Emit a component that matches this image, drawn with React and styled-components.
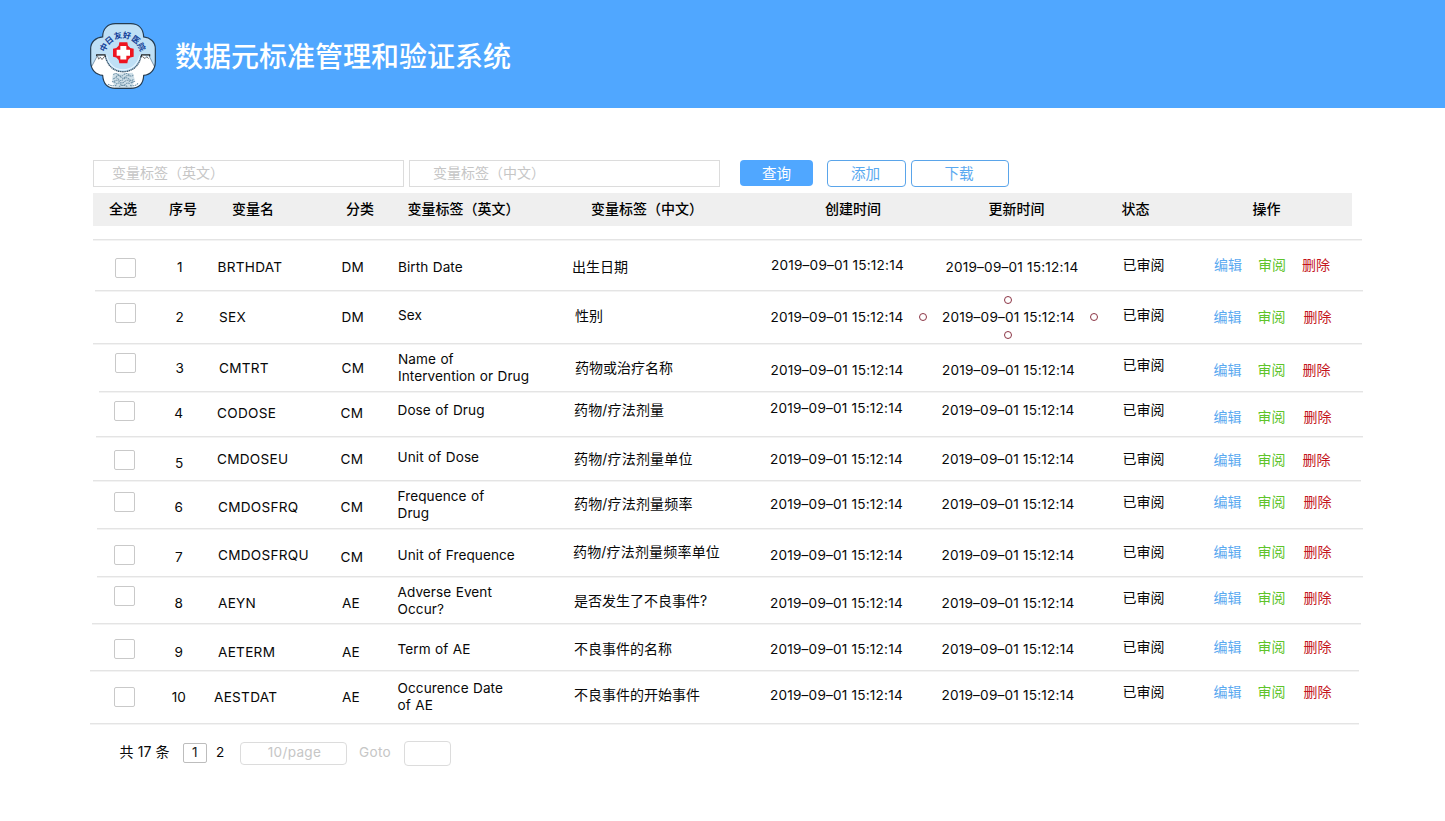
import React from 'react';
import styled, { createGlobalStyle } from 'styled-components';

const GlobalStyle = createGlobalStyle`
  * { box-sizing: border-box; }
  body {
    margin: 0;
    background: #fff;
    color: #080808;
    font-family: Inter, "Noto Sans CJK SC", sans-serif;
    font-size: 14px;
    line-height: 17px;
  }
`;

const Page = styled.div`
  width: 1445px;
  height: 821px;
  overflow: hidden;
`;

const Header = styled.header`
  display: flex;
  align-items: center;
  gap: 19px;
  height: 108px;
  padding: 0 0 0 90px;
  background: #50a7ff;
`;

const Emblem = styled.svg`
  display: block;
  width: 66px;
  height: 66px;
  margin-top: 4px;
`;

const Title = styled.h1`
  margin: 2px 0 0;
  color: #fff;
  font: 500 28px/40px "Noto Sans CJK SC", sans-serif;
`;

const Toolbar = styled.div`
  display: flex;
  align-items: flex-start;
  height: 85px;
  padding: 52px 0 0 93px;
`;

const SearchBox = styled.div`
  width: 310.5px;
  height: 27px;
  margin-right: ${(p) => p.$after}px;
  padding-left: ${(p) => p.$inset}px;
  border: 1px solid #dcdcdc;
  color: #c6c6c6;
  font-family: "Noto Sans CJK SC", sans-serif;
  line-height: 23px;
`;

const Button = styled.button`
  display: flex;
  justify-content: center;
  width: ${(p) => p.$width}px;
  height: ${(p) => (p.$primary ? 26 : 27)}px;
  margin: 0 ${(p) => p.$after || 0}px 0 0;
  padding: 0 ${(p) => (p.$primary ? 0 : 2)}px 0 0;
  border: ${(p) => (p.$primary ? '0' : '1px solid #5aa5ea')};
  border-radius: 4px;
  background: ${(p) => (p.$primary ? '#50a7ff' : '#fff')};
  color: ${(p) => (p.$primary ? '#fff' : '#5aa9f0')};
  font: 400 14.6px/${(p) => (p.$primary ? 26 : 24)}px "Noto Sans CJK SC", sans-serif;
`;

const TableHead = styled.div`
  display: grid;
  grid-template-columns: 60px 63px 114px 61.5px 183.5px 234px 163.5px 133px 131px 1fr;
  width: 1259px;
  height: 33px;
  margin: 0 0 13px 93px;
  padding-left: 16px;
  background: #efefef;
  color: #000;
  font-family: "Noto Sans CJK SC", sans-serif;
  font-weight: 500;
  line-height: 30px;
`;

const Divider = styled.div`
  width: ${(p) => p.$to - p.$from}px;
  height: 2px;
  margin-left: ${(p) => p.$from}px;
  border-top: 1px solid #e4e4e4;
  border-bottom: 1px solid #f3f3f3;
`;

const Row = styled.div`
  display: grid;
  grid-template-columns: 114px 45px 58px 123.5px 56.5px 177px 196px 171.5px 181px 91px 1fr;
  height: ${(p) => p.$height}px;
`;

const Cell = styled.div`
  position: relative;
  padding-top: ${(p) => p.$mid - 11}px;
  letter-spacing: ${(p) => p.$track || 0}px;
  text-align: ${(p) => p.$align || 'left'};
  white-space: pre;
`;

const LatinCell = styled(Cell)`
  padding-top: ${(p) => p.$mid - 10}px;
  font-size: 13.6px;
  font-weight: 400;
  word-spacing: ${(p) => p.$gap || 0}px;
`;

const Shifted = styled.span`
  display: inline-block;
  margin-left: ${(p) => p.$by}px;
`;

const Checkbox = styled.div`
  width: 21px;
  height: 20px;
  margin: ${(p) => p.$top - 2}px 0 0 ${(p) => p.$dx}px;
  border: 1px solid #c9c9c9;
  border-radius: 2px;
`;

const Actions = styled.div`
  display: flex;
  padding-top: ${(p) => p.$mid - 11}px;
  padding-left: ${(p) => p.$dx}px;
`;

const Action = styled.span`
  width: ${(p) => p.$width || 44}px;
  color: ${(p) => p.$color};
`;

const Handle = styled.i`
  position: absolute;
  left: ${(p) => p.$x}px;
  top: ${(p) => p.$y}px;
  width: 8px;
  height: 8px;
  border: 1px solid #8c3545;
  border-radius: 50%;
`;

const Pagination = styled.footer`
  display: flex;
  align-items: flex-start;
  height: 24px;
  margin: 16px 0 0 120px;
`;

const Total = styled.span`
  width: 63px;
  padding-top: 2px;
  margin-left: -0.5px;
  margin-right: 0.5px;
  letter-spacing: 0.1px;
`;

const PageBox = styled.span`
  width: ${(p) => p.$width}px;
  height: ${(p) => p.$height}px;
  margin-top: ${(p) => p.$top || 0}px;
  padding-left: ${(p) => p.$inset || 0}px;
  border: 1px solid ${(p) => p.$line};
  border-radius: ${(p) => p.$radius}px;
  color: ${(p) => p.$color || '#222'};
  font-size: 13.6px;
  line-height: ${(p) => p.$leading || 17}px;
  text-align: center;
  letter-spacing: 0.3px;
`;

const PageNumber = styled.span`
  width: 33px;
  padding: 3px 0 0 9px;
  font-size: 13.6px;
`;

const Goto = styled.span`
  width: 57px;
  padding: 3px 0 0 12px;
  color: #c6c6c6;
  font-size: 13.6px;
  letter-spacing: 0.3px;
`;

const heads = ['全选', '序号', '变量名', '分类', '变量标签（英文）', '变量标签（中文）', '创建时间', '更新时间', '状态', '操作'];

const STAMP = '2019–09–01 15:12:14';

/* Each value is [vertical middle, horizontal shift] inside its row. */
const rows = [
  { h: 51, line: [93, 1362], box: [19, 1], name: 'BRTHDAT', type: 'DM', en: 'Birth Date', cn: '出生日期', at: { no: [28, 1], name: [28, 0.5], type: [28, 1], en: [28, 1], cn: [28, -2], made: [26, 1], edit: [28, 4], state: [26, 0], ops: [26, 0.5, 44] } },
  { h: 53, line: [95, 1363], box: [13, 1], name: 'SEX', type: 'DM', en: 'Sex', cn: '性别', handles: true, at: { no: [27, 1], name: [27, 2], type: [27, 1], en: [25, 1], cn: [26, 1], made: [27, 0.5], edit: [27, 0.5], state: [25, 0], ops: [27, 0, 46] } },
  { h: 48, line: [93, 1362], box: [10, 1], name: 'CMTRT', type: 'CM', en: 'Name of\nIntervention or Drug', cn: '药物或治疗名称', at: { no: [25, 1], name: [25, 2], type: [25, 1], en: [16, 1], cn: [25, 1], made: [27, 0.5], edit: [27, 0.5], state: [22, 0], ops: [27, 0, 45] } },
  { h: 45, line: [99, 1363], box: [10, 0], name: 'CODOSE', type: 'CM', en: 'Dose of Drug', cn: '药物/疗法剂量', at: { no: [22, 0], name: [22, 0], type: [22, 0], en: [19, 0.5], cn: [19, 0], made: [17, 0], edit: [19, 0], state: [19, 0], ops: [26, 0, 46] } },
  { h: 44, line: [96, 1363], box: [14, 0], name: 'CMDOSEU', type: 'CM', en: 'Unit of Dose', cn: '药物/疗法剂量单位', at: { no: [27, 0.5], name: [23, 0], type: [23, 0], en: [21, 0.5], cn: [23, 0], made: [23, 0], edit: [23, 0], state: [23, 0], ops: [24, 0, 45] } },
  { h: 48, line: [93, 1361], box: [12, 0], name: 'CMDOSFRQ', type: 'CM', en: 'Frequence of\nDrug', cn: '药物/疗法剂量频率', at: { no: [27, 0], name: [27, 1], type: [27, 0], en: [16, 0.5], cn: [24, 0], made: [24, 0], edit: [24, 0], state: [22, 0], ops: [22, 0, 46] } },
  { h: 48, line: [97, 1363], box: [17, 0], name: 'CMDOSFRQU', type: 'CM', en: 'Unit of Frequence', cn: '药物/疗法剂量频率单位', at: { no: [29, 0], name: [27, 1], type: [29, 0], en: [27, 0.5], cn: [24, -1], made: [27, 0], edit: [27, 0], state: [24, 0], ops: [24, 0, 46] } },
  { h: 47, line: [97, 1363], box: [10, 0], name: 'AEYN', type: 'AE', en: 'Adverse Event\nOccur?', cn: '是否发生了不良事件?', at: { no: [27, 0], name: [27, 1], type: [27, 1.5], en: [16, 0.5], cn: [25, 0], made: [27, 0], edit: [27, 0], state: [22, 0], ops: [22, 0, 46] } },
  { h: 47, line: [92, 1361], box: [16, 0], name: 'AETERM', type: 'AE', en: 'Term of AE', cn: '不良事件的名称', at: { no: [29, 0], name: [29, 1], type: [29, 1.5], en: [26, 0.5], cn: [26, 0], made: [26, 0], edit: [26, 0], state: [24, 0], ops: [24, 0, 46] } },
  { h: 53, line: [90, 1359], box: [17, 0], name: 'AESTDAT', type: 'AE', en: 'Occurence Date\nof AE', cn: '不良事件的开始事件', at: { no: [27, 0], name: [27, -3], type: [27, 1.5], en: [18, 0.5], cn: [25, 0], made: [25, 0], edit: [25, 0], state: [22, 0], ops: [22, 0, 46] } },
];

function Latin({ at, children, extra, ...rest }) {
  return (
    <LatinCell $mid={at[0]} {...rest}>
      <Shifted $by={at[1]}>{children}</Shifted>
      {extra}
    </LatinCell>
  );
}

function Han({ at, track, children }) {
  return (
    <Cell $mid={at[0]} $track={track}>
      <Shifted $by={at[1]}>{children}</Shifted>
    </Cell>
  );
}

const selection = (
  <>
    <Handle $x={-23} $y={21} />
    <Handle $x={148} $y={21} />
    <Handle $x={62} $y={4} />
    <Handle $x={62} $y={39} />
  </>
);

function DataRow({ row, index }) {
  const { at } = row;
  return (
    <>
      <Divider $from={row.line[0]} $to={row.line[1]} />
      <Row $height={row.h - 2}>
        <span />
        <Checkbox $top={row.box[0]} $dx={row.box[1]} />
        <Latin at={[at.no[0], at.no[1] * 2 - 18.5]} $align="center">{index + 1}</Latin>
        <Latin at={at.name} $track={0.28}>{row.name}</Latin>
        <Latin at={at.type} $track={0.2}>{row.type}</Latin>
        <Latin at={at.en} $track={0.07} $gap={0.5}>{row.en}</Latin>
        <Han at={at.cn} track={row.cn.includes('/') ? 0.18 : 0}>{row.cn}</Han>
        <Latin at={at.made} $track={0.2}>{STAMP}</Latin>
        <Latin at={at.edit} $track={0.2} extra={row.handles && selection}>{STAMP}</Latin>
        <Han at={at.state}>已审阅</Han>
        <Actions $mid={at.ops[0]} $dx={at.ops[1]}>
          <Action $color="#5aa9f0">编辑</Action>
          <Action $color="#5ec42a" $width={at.ops[2]}>审阅</Action>
          <Action $color="#c4161c">删除</Action>
        </Actions>
      </Row>
    </>
  );
}

const OUTLINE =
  'M38 41C38 16 54 2 76 2H122C145 2 160 16 161 41C181 43 196 56 196 76V114C196 139 181 153 161 155C160 180 145 193 122 193H76C54 193 40 180 38 155C18 153 2 139 2 114V76C2 56 17 43 38 41Z';

const arcText = [
  ['中', 42, 72, -62],
  ['日', 58, 52, -40],
  ['友', 84, 38, -14],
  ['好', 111, 38, 10],
  ['医', 137, 50, 36],
  ['院', 154, 71, 62],
];

function HospitalEmblem() {
  return (
    <Emblem viewBox="0 0 198 195" preserveAspectRatio="none">
      <clipPath id="emblem-shape">
        <path d={OUTLINE} />
      </clipPath>
      <g clipPath="url(#emblem-shape)">
        <rect width="198" height="195" fill="#bfe0f6" />
        <path d="M0 138L22 96L29 100L36 96L45 97C51 126 72 144 99 144C127 144 149 126 154 97L164 96L170 102L176 96L198 136V195H0Z" fill="#fff" />
        <path d="M69 150L128 147L134 166L126 193H76L66 168Z" fill="#cfdfe8" />
        <path d="M50 96C55 121 73 138 99 138C125 138 144 121 149 96" fill="none" stroke="#eaf6ff" strokeWidth="3" />
        <path d="M46 98C52 127 73 144 99 144C126 144 148 127 153 98" fill="none" stroke="#3b566c" strokeWidth="4" strokeDasharray="4 1.5" />
        <path d="M20 98V94H45L46 101M153 101L155 94H179V99" fill="none" stroke="#222" strokeWidth="3.5" />
        <path d="M23 98L26 107L31 101L36 108L43 99M157 99L165 105L170 100L176 105" fill="none" stroke="#555" strokeWidth="2.5" />
        <path d="M22 97L2 134M177 97L196 134" fill="none" stroke="#52718a" strokeWidth="2" />
        <g fill="none" stroke="#6f92a8" strokeWidth="3" strokeDasharray="5 2">
          <path d="M70 153Q77 145 85 153T101 153T117 153T130 153" />
          <path d="M78 159Q85 151 92 159T106 159T121 159" />
          <path d="M70 166Q77 158 85 166T101 166T117 166T130 166" />
          <path d="M72 173Q80 165 88 173T104 173T120 173T129 173" />
          <path d="M78 181Q85 173 92 181T106 181T121 181" />
          <path d="M54 181Q67 188 79 184M120 185Q137 188 144 178M66 173L76 176M124 176L137 171" />
          <path d="M87 188Q99 180 112 188" />
        </g>
      </g>
      <path d={OUTLINE} fill="none" stroke="#263c50" strokeWidth="3.5" />
      <path d="M88 57H112L114 67L121 74L131 76V100L121 102L114 109L112 119H88L86 109L79 102L69 100V76L79 74L86 67Z" fill="#ee1520" />
      <path d="M91 68H109V79H120V97H109V108H91V97H80V79H91Z" fill="#fff" />
      <g fill="#123d96" fontFamily="Noto Sans CJK SC, sans-serif" fontSize="24" fontWeight="700" textAnchor="middle">
        {arcText.map(([char, x, y, angle]) => (
          <text key={char} x="0" y="8" transform={`translate(${x} ${y}) rotate(${angle})`}>{char}</text>
        ))}
      </g>
    </Emblem>
  );
}

export default function App() {
  return (
    <Page>
      <GlobalStyle />
      <Header>
        <HospitalEmblem />
        <Title>数据元标准管理和验证系统</Title>
      </Header>
      <Toolbar>
        <SearchBox $inset={18} $after={5.5}>变量标签（英文）</SearchBox>
        <SearchBox $inset={23} $after={20.5}>变量标签（中文）</SearchBox>
        <Button $primary $width={73} $after={14}>查询</Button>
        <Button $width={79} $after={5}>添加</Button>
        <Button $width={98}>下载</Button>
      </Toolbar>
      <TableHead>
        {heads.map((h) => <span key={h}>{h}</span>)}
      </TableHead>
      {rows.map((row, i) => <DataRow key={row.name} row={row} index={i} />)}
      <Divider $from={90} $to={1359} />
      <Pagination>
        <Total>共 17 条</Total>
        <PageBox $width={24} $height={20} $top={2} $line="#bdbdbd" $radius={2}>1</PageBox>
        <PageNumber>2</PageNumber>
        <PageBox $width={107} $height={23} $top={1} $leading={19} $inset={2} $line="#dcdcdc" $radius={4} $color="#c6c6c6">10/page</PageBox>
        <Goto>Goto</Goto>
        <PageBox $width={47} $height={25} $line="#dcdcdc" $radius={4} />
      </Pagination>
    </Page>
  );
}
